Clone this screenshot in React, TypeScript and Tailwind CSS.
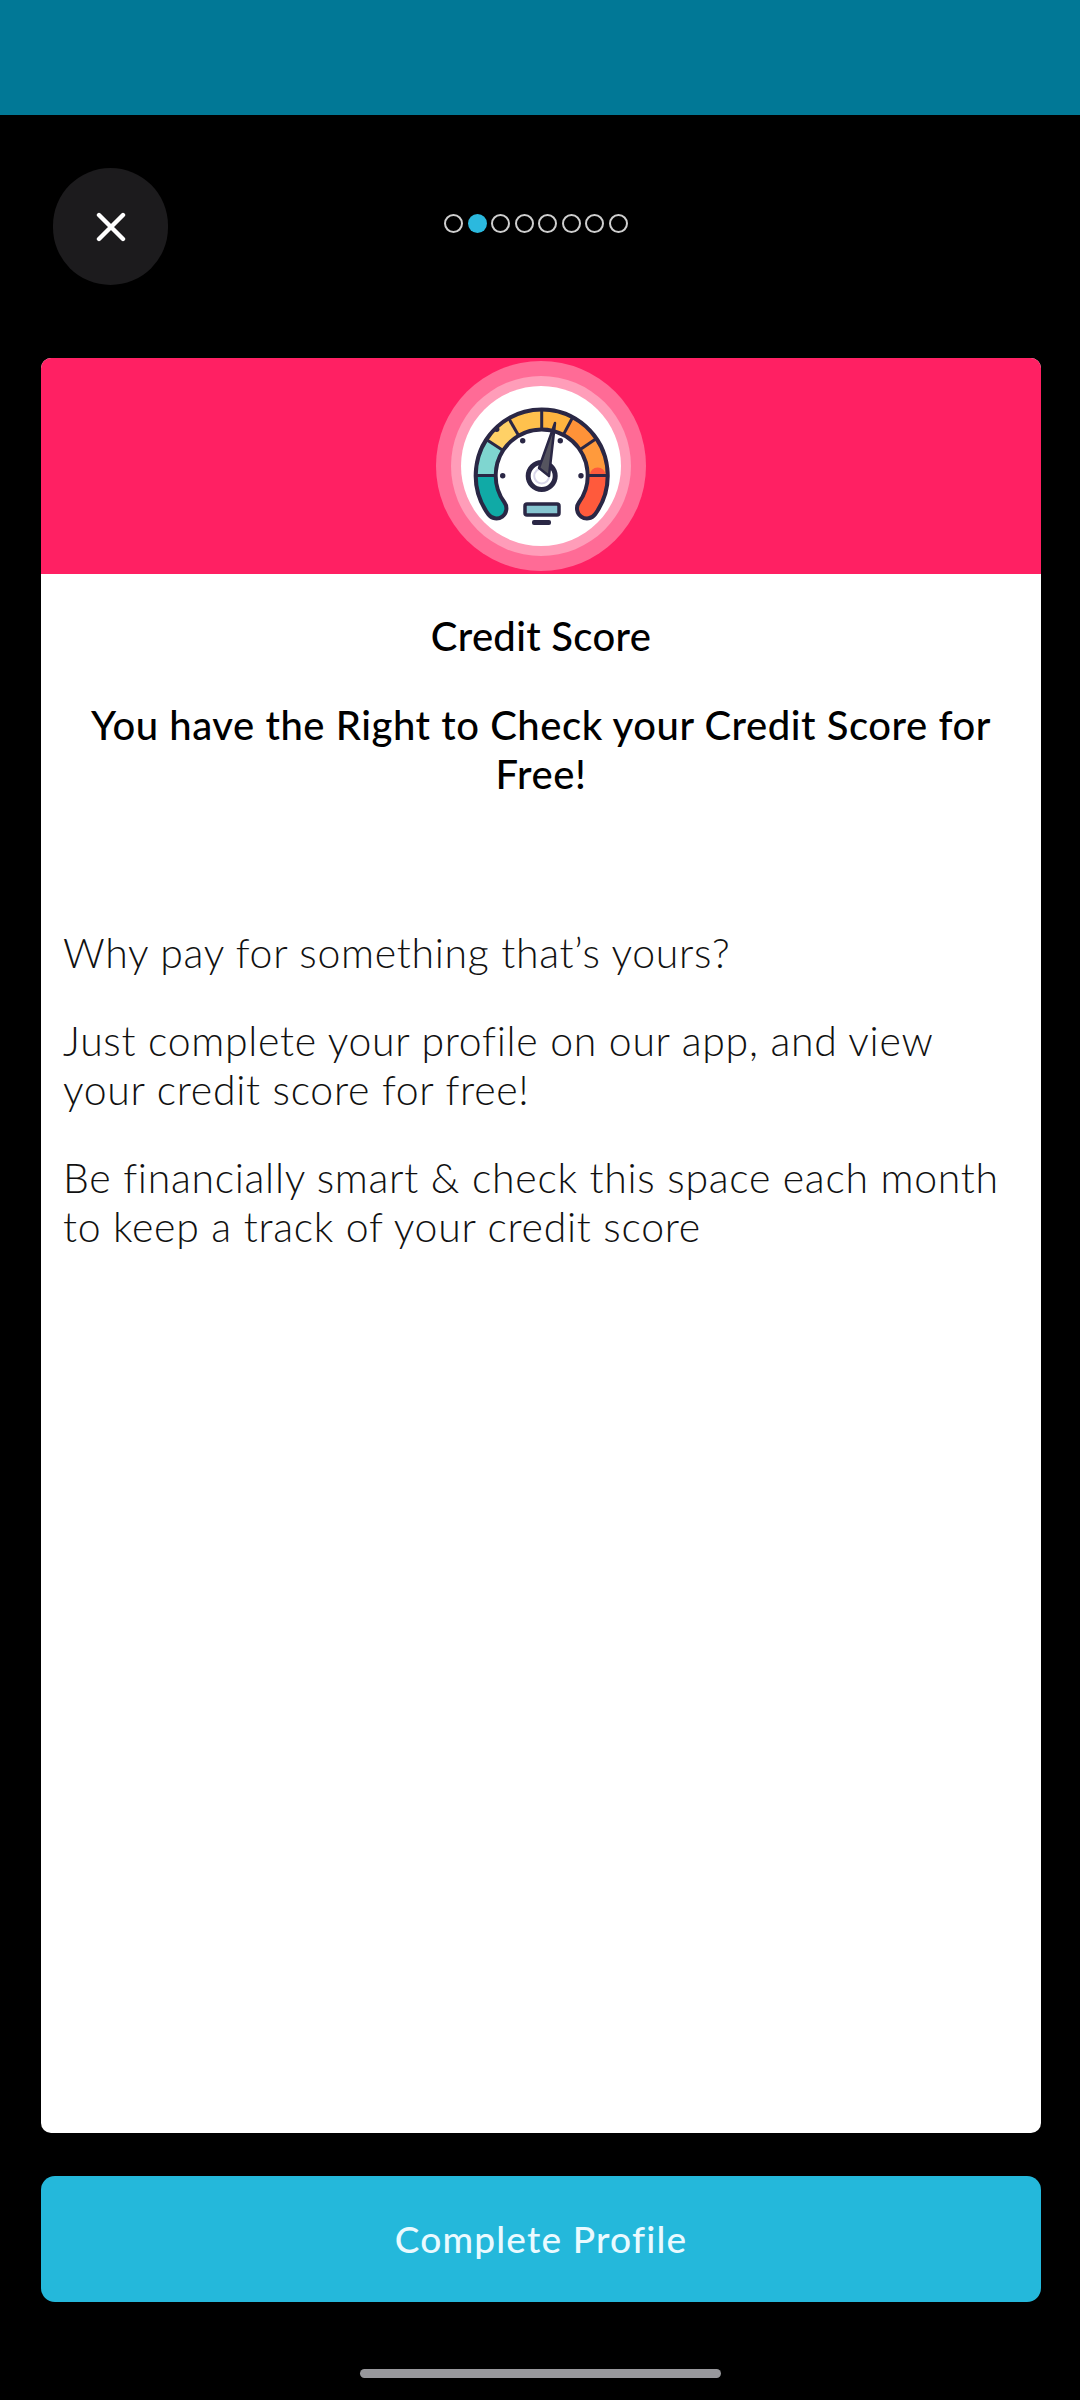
const DOTS = [0, 1, 2, 3, 4, 5, 6, 7]

const GAUGE_X = 80.7
const GAUGE_Y = 89.5

// point on the dial, angle in degrees counted from the right, going anticlockwise
function point(radius: number, angle: number) {
  const rad = (angle * Math.PI) / 180
  return `${(GAUGE_X + radius * Math.cos(rad)).toFixed(2)} ${(GAUGE_Y - radius * Math.sin(rad)).toFixed(2)}`
}

function arc(from: number, to: number, radius = 56) {
  return `M${point(radius, from)} A${radius} ${radius} 0 ${from - to > 180 ? 1 : 0} 1 ${point(radius, to)}`
}

const SEGMENTS = [
  { from: 216, to: 180, color: '#10aaa6', round: true },
  { from: 180, to: 147, color: '#7fd6d0' },
  { from: 147, to: 120, color: '#ffd166' },
  { from: 120, to: 90, color: '#ffc14d' },
  { from: 90, to: 62, color: '#ffb43f' },
  { from: 62, to: 34, color: '#ff9238' },
  { from: 34, to: 0, color: '#ff9a3c' },
  { from: 0, to: -36, color: '#ff5a3c', round: true },
]

const DIVIDERS = [180, 147, 120, 90, 62, 34, 0]

function Gauge() {
  return (
    <svg viewBox="0 0 160 160" className="h-[160px] w-[160px]" fill="none">
      <path d={arc(216, -36)} stroke="#2a2745" strokeWidth="24" strokeLinecap="round" />
      {SEGMENTS.map((s) => (
        <path
          key={s.from}
          d={arc(s.from, s.to)}
          stroke={s.color}
          strokeWidth="16"
          strokeLinecap={s.round ? 'round' : 'butt'}
        />
      ))}
      {DIVIDERS.map((angle) => (
        <path
          key={angle}
          d={`M${point(46, angle)} L${point(66, angle)}`}
          stroke="#2a2745"
          strokeWidth="3"
        />
      ))}
      {/* tick dots */}
      <circle cx="61.7" cy="54.7" r="2.7" fill="#2a2745" />
      <circle cx="99.3" cy="54.7" r="2.7" fill="#2a2745" />
      <circle cx="41.7" cy="89.7" r="2.7" fill="#2a2745" />
      <circle cx="120" cy="89.7" r="2.7" fill="#2a2745" />
      <circle cx="35.7" cy="43.3" r="2.7" fill="#2a2745" />
      {/* hub and needle */}
      <circle cx="80.7" cy="90" r="13.5" fill="#fff" stroke="#2a2745" strokeWidth="5" />
      <circle cx="80.7" cy="90" r="7.5" stroke="#d8d6ea" strokeWidth="2" />
      <path d="M78 82 L94 37 L88 90 Z" fill="#55545f" stroke="#2a2745" strokeWidth="2.5" strokeLinejoin="round" />
      {/* base */}
      <rect x="64" y="118" width="34" height="11" rx="2" fill="#86c5d0" stroke="#2a2745" strokeWidth="3.5" />
      <rect x="71" y="134" width="19" height="5" rx="2" fill="#2a2745" />
    </svg>
  )
}

export default function App() {
  return (
    <div className="flex h-[2400px] w-[1080px] flex-col bg-black font-['Lato',sans-serif]">
      <div className="h-[115px] shrink-0 bg-[#017896]" />

      <header className="relative h-[243px] shrink-0">
        <button className="absolute left-[53px] top-[53px] flex h-[117px] w-[115px] items-center justify-center rounded-full bg-[#1c1b1d]">
          <svg viewBox="0 0 30 30" className="h-[30px] w-[30px]" stroke="#fff" strokeWidth="4.4" strokeLinecap="round">
            <path d="M3 3 L27 27 M27 3 L3 27" />
          </svg>
        </button>

        <div className="absolute left-[444px] top-[99px] flex gap-[4.5px]">
          {DOTS.map((dot) => (
            <span
              key={dot}
              className={
                dot === 1
                  ? 'h-[19px] w-[19px] rounded-full bg-[#2bb9de]'
                  : 'h-[19px] w-[19px] rounded-full border-2 border-[#cfcfcf]'
              }
            />
          ))}
        </div>
      </header>

      <main className="ml-[41px] flex h-[1775px] w-[1000px] shrink-0 flex-col overflow-hidden rounded-[10px] bg-white">
        <div className="flex h-[216px] shrink-0 items-center justify-center bg-[#ff2063]">
          <div className="flex h-[210px] w-[210px] items-center justify-center rounded-full bg-[#ff6b96]">
            <div className="flex h-[180px] w-[180px] items-center justify-center rounded-full bg-[#ff9db9]">
              <div className="flex h-[160px] w-[160px] items-center justify-center rounded-full bg-white">
                <Gauge />
              </div>
            </div>
          </div>
        </div>

        <div className="px-[22px] pt-[38px]">
          <h1 className="text-center text-[40px] font-medium leading-[49px] tracking-[0.3px] text-black">Credit Score</h1>
          <h2 className="mt-[40px] text-center text-[40px] font-medium leading-[49px] tracking-[0.55px] text-black">
            You have the Right to Check your Credit Score for Free!
          </h2>

          <div className="mt-[129px] text-[41px] font-light leading-[49px] tracking-[0.7px] text-[#111]">
            <p>Why pay for something that’s yours?</p>
            <p className="mt-[39px]">Just complete your profile on our app, and view your credit score for free!</p>
            <p className="mt-[39px]">Be financially smart &amp; check this space each month to keep a track of your credit score</p>
          </div>
        </div>
      </main>

      <button className="ml-[41px] mt-[43px] flex h-[126px] w-[1000px] shrink-0 items-center justify-center rounded-[14px] bg-[#24b8db] text-[37px] font-medium tracking-[1.2px] text-[#eafaff]">
        Complete Profile
      </button>

      <div className="mt-[67px] h-[9px] w-[361px] shrink-0 self-center rounded-full bg-[#98989c]" />
    </div>
  )
}
